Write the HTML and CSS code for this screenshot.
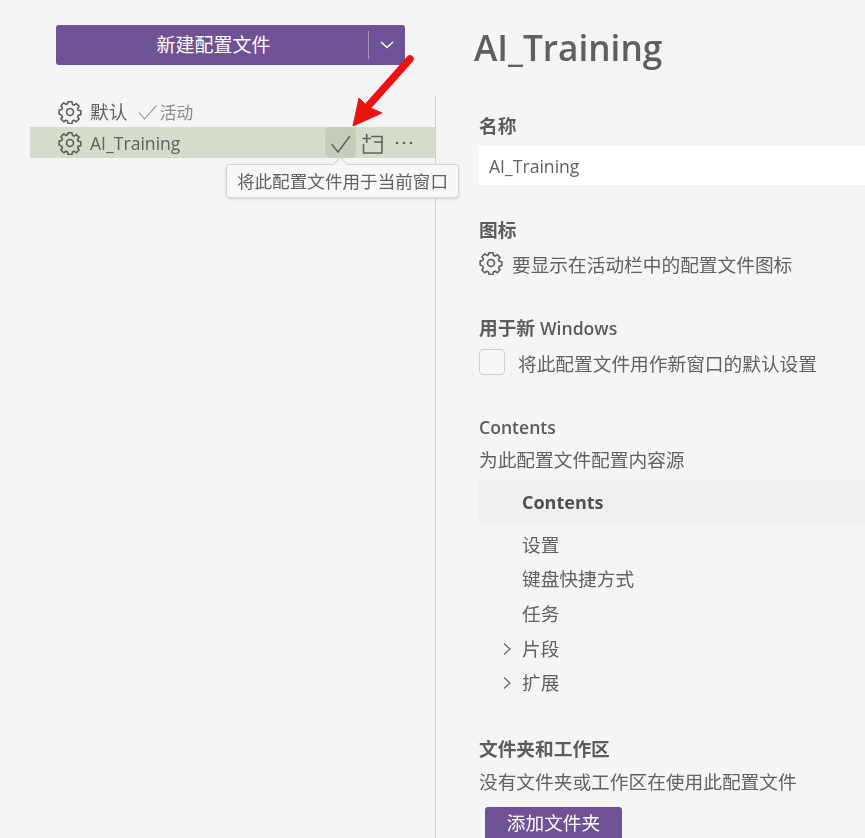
FILE: index.html
```html
<!DOCTYPE html>
<html lang="zh-CN">
<head>
<meta charset="utf-8">
<title>配置文件</title>
<link rel="stylesheet" href="styles.css">
</head>
<body>
<svg width="0" height="0" class="defs" aria-hidden="true">
  <defs>
    <symbol id="gear" viewBox="0 0 16 16">
      <path fill="none" stroke="currentColor" stroke-width="1.05" stroke-linejoin="round" d="M6.7 1.2h2.6l.35 1.75 1.05.45 1.5-1 1.85 1.85-1 1.5.45 1.05 1.75.35v2.6l-1.75.35-.45 1.05 1 1.5-1.85 1.85-1.5-1-1.05.45-.35 1.75H6.7l-.35-1.75-1.05-.45-1.5 1-1.85-1.85 1-1.5-.45-1.05L.75 9.3V6.7l1.75-.35.45-1.05-1-1.5L3.8 1.95l1.5 1 1.05-.45z"/>
      <circle cx="8" cy="8" r="2.3" fill="none" stroke="currentColor" stroke-width="1.05"/>
    </symbol>
  </defs>
</svg>
<div class="page">
  <aside class="sidebar">
    <div class="new-button">
      <span class="new-label">新建配置文件</span>
      <span class="new-sep"></span>
      <span class="new-caret">
        <svg width="16" height="16" viewBox="0 0 16 16"><path d="M2 5 8 10.5 14 5" fill="none" stroke="currentColor" stroke-width="1.5"/></svg>
      </span>
    </div>
    <div class="list">
      <div class="row">
        <svg class="gear" width="24" height="24"><use href="#gear"/></svg>
        <span class="row-name">默认</span>
        <span class="active-tag">
          <svg width="22" height="22" viewBox="0 0 22 22"><path d="M2 11.5 7.5 18 19.5 4.5" fill="none" stroke="currentColor" stroke-width="1.1"/></svg>
          <span>活动</span>
        </span>
      </div>
      <div class="row row-selected">
        <svg class="gear" width="24" height="24"><use href="#gear"/></svg>
        <span class="row-name latin">AI_Training</span>
        <span class="actions">
          <span class="action action-on">
            <svg width="22" height="22" viewBox="0 0 22 22"><path d="M1.5 12 8 20 20 4" fill="none" stroke="currentColor" stroke-width="1.5"/></svg>
          </span>
          <span class="action">
            <svg width="24" height="24" viewBox="0 0 24 24"><path d="M5.7 3v9M1.5 7.5h8.5M10 5.5h11V22H2.5v-9M13 11h8" fill="none" stroke="currentColor" stroke-width="1.6"/></svg>
          </span>
          <span class="action">
            <svg width="22" height="22" viewBox="0 0 22 22"><circle cx="4" cy="11" r="1.3" fill="currentColor"/><circle cx="11" cy="11" r="1.3" fill="currentColor"/><circle cx="18" cy="11" r="1.3" fill="currentColor"/></svg>
          </span>
        </span>
      </div>
    </div>
    <div class="tooltip">将此配置文件用于当前窗口</div>
    <svg class="arrow" width="90" height="90" viewBox="0 0 90 90"><path d="M75 8 34 54" fill="none" stroke="#ee1111" stroke-width="7.5" stroke-linecap="round"/><path d="M18 75 24 47 33 56 47 62z" fill="#ee1111" stroke="#ee1111" stroke-linejoin="round"/></svg>
  </aside>
  <main class="detail">
    <h1 class="title">AI_Training</h1>
    <section class="field field-name">
      <h2 class="label">名称</h2>
      <div class="input latin">AI_Training</div>
    </section>
    <section class="field field-icon">
      <h2 class="label">图标</h2>
      <div class="line">
        <svg class="gear" width="24" height="24"><use href="#gear"/></svg>
        <span>要显示在活动栏中的配置文件图标</span>
      </div>
    </section>
    <section class="field field-win">
      <h2 class="label">用于新 <span class="latin">Windows</span></h2>
      <div class="line line-check">
        <span class="checkbox"></span>
        <span>将此配置文件用作新窗口的默认设置</span>
      </div>
    </section>
    <section class="field field-contents">
      <h2 class="label label-light">Contents</h2>
      <p class="desc">为此配置文件配置内容源</p>
      <div class="tree-head">Contents</div>
      <ul class="tree">
        <li class="tree-item">设置</li>
        <li class="tree-item">键盘快捷方式</li>
        <li class="tree-item">任务</li>
        <li class="tree-item"><svg class="twist" width="16" height="16" viewBox="0 0 16 16"><path d="M5 2.5 11 8l-6 5.5" fill="none" stroke="currentColor" stroke-width="1.2"/></svg>片段</li>
        <li class="tree-item"><svg class="twist" width="16" height="16" viewBox="0 0 16 16"><path d="M5 2.5 11 8l-6 5.5" fill="none" stroke="currentColor" stroke-width="1.2"/></svg>扩展</li>
      </ul>
    </section>
    <section class="field field-folders">
      <h2 class="label">文件夹和工作区</h2>
      <p class="desc desc-folders">没有文件夹或工作区在使用此配置文件</p>
      <div class="add-button">添加文件夹</div>
    </section>
  </main>
</div>
</body>
</html>
```

FILE: styles.css
```css
* { box-sizing: border-box; }
html, body { margin: 0; height: 100%; }
body {
  background: #f5f5f5;
  color: #616161;
  font-family: "Open Sans", "Noto Sans CJK SC", sans-serif;
  font-size: 18.7px;
  overflow: hidden;
}
.defs { position: absolute; }
.latin { font-size: 17.6px; }
.page {
  display: grid;
  grid-template-columns: 436px 1fr;
  height: 838px;
  overflow: hidden;
  filter: blur(0.35px);
}
.sidebar { position: relative; padding: 25px 0 0 30px; }
.new-button {
  display: flex;
  align-items: center;
  width: 349px;
  height: 40px;
  margin-left: 26px;
  background: #6f5295;
  border-radius: 3px;
  color: #fff;
}
.new-label { flex: 1; text-align: center; padding-left: 3px; font-size: 19px; line-height: 40px; }
.new-sep { width: 1px; height: 28px; background: #a898bd; }
.new-caret { width: 36px; display: flex; justify-content: center; }
.list {
  margin-top: 31px;
  height: 742px;
  border-right: 1px solid #d0d0d0;
}
.row {
  display: flex;
  align-items: center;
  height: 31px;
  padding-left: 28px;
}
.row-selected { background: #d4dccb; }
.gear { flex: none; color: #5c5c5c; }
.row-name { margin-left: 8px; line-height: 31px; }
.row-name.latin { padding-top: 2px; }
.active-tag { display: flex; align-items: center; margin-left: 10px; color: #8c8c8c; font-size: 17px; }
.actions { display: flex; align-items: center; margin-left: auto; padding-right: 16px; }
.action {
  display: flex;
  align-items: center;
  justify-content: center;
  width: 31px;
  height: 31px;
}
.action-on { background: #c5cdbd; border-radius: 5px; margin-right: 1px; }
.tooltip {
  position: absolute;
  left: 226px;
  top: 164px;
  width: 233px;
  height: 34px;
  background: #f8f8f8;
  border: 1px solid #d4d4d4;
  border-radius: 4px;
  box-shadow: 0 1px 3px rgba(0,0,0,.14);
  font-size: 17.6px;
  line-height: 32px;
  text-align: center;
  white-space: nowrap;
}
.tooltip::before {
  content: "";
  position: absolute;
  left: 108px;
  top: -6px;
  width: 10px;
  height: 10px;
  background: #f8f8f8;
  border-left: 1px solid #d4d4d4;
  border-top: 1px solid #d4d4d4;
  transform: rotate(45deg);
}
.arrow { position: absolute; left: 335px; top: 51px; }
.detail { padding-left: 43px; min-width: 0; }
.title {
  margin: 24px 0 0 -5px;
  font-size: 35.2px;
  font-weight: 600;
  line-height: 46px;
  color: #5f5f5f;
}
.field { margin: 0; }
.field-name { margin-top: 42px; }
.field-icon { margin-top: 31px; }
.field-win { margin-top: 36px; }
.field-contents { margin-top: 36px; }
.field-folders { margin-top: 34.5px; }
.label {
  margin: 0;
  font-size: 18.7px;
  font-weight: 700;
  line-height: 28px;
  color: #5c5c5c;
}
.label .latin { font-weight: 600; }
.label-light { font-weight: 600; font-size: 17.6px; }
.input {
  height: 39px;
  margin-top: 6px;
  padding-left: 10px;
  background: #fff;
  line-height: 41px;
}
.line { display: flex; align-items: center; gap: 9px; margin-top: 4px; height: 30px; }
.line-check { gap: 13px; margin-top: 5px; }
.checkbox {
  width: 26px;
  height: 26px;
  background: #f7f7f7;
  border: 1px solid #cfcfcf;
  border-radius: 4px;
}
.desc { margin: 4px 0 0; line-height: 30px; }
.desc-folders { margin-top: 4px; }
.tree-head {
  height: 44px;
  margin-top: 5px;
  padding-left: 43px;
  background: #f0f0f0;
  font-weight: 700;
  font-size: 18px;
  line-height: 44px;
  color: #505050;
}
.tree { list-style: none; margin: 3.5px 0 0; padding: 0; }
.tree-item { position: relative; height: 34.7px; padding-left: 43px; line-height: 34.7px; }
.twist { position: absolute; left: 20px; top: 9px; }
.add-button {
  width: 137px;
  height: 40px;
  margin: 10px 0 0 6px;
  background: #6f5295;
  border-radius: 3px;
  color: #fff;
  text-align: center;
  line-height: 32px;
}
```
